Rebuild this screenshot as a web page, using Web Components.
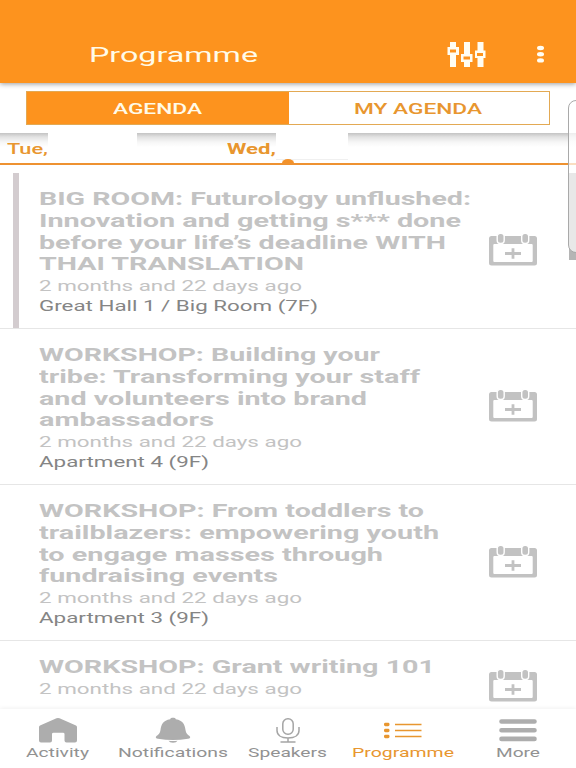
<!DOCTYPE html>
<html lang="en">
<head>
<meta charset="utf-8">
<title>Programme</title>
<style>
    body {
        margin: 0;
        background: #fff;
        font-family: Roboto, "Liberation Sans", sans-serif;
        --accent: #fd931e;
        --muted: #c3c3c3;
    }
</style>
</head>
<body>
<programme-app></programme-app>

<script>
/**
 * One line of text, stretched sideways to the given width
 */
class WideText extends HTMLElement {
    connectedCallback() {
        const root = this.attachShadow({ mode: "open" });
        root.innerHTML = `
            <style>
                :host {
                    display: block;
                    white-space: nowrap;
                }
                span {
                    display: inline-block;
                    transform-origin: 0 50%;
                }
            </style>
            <span><slot></slot></span>
        `;
        const width = Number(this.getAttribute("width"));
        const span = root.querySelector("span");
        this.style.width = width + "px";
        span.style.transform = `scaleX(${width / span.getBoundingClientRect().width})`;
    }
}

class AppHeader extends HTMLElement {
    constructor() {
        super();
        this.attachShadow({ mode: "open" }).innerHTML = `
            <style>
                :host {
                    display: flex;
                    box-sizing: border-box;
                    height: 83px;
                    padding: 38px 31px 0 89px;
                    align-items: flex-start;
                    background: var(--accent);
                    box-shadow: 0 1px 5px rgba(0, 0, 0, .4);
                    position: relative;
                    z-index: 2;
                    color: #fffbe9;
                    font-size: 20px;
                    line-height: 34px;
                }
                .filter {
                    margin: 3px 0 0 auto;
                }
                .dots {
                    margin: 7px 0 0 50px;
                }
            </style>
            <slot></slot>
            <svg class="filter" width="40" height="27" viewBox="0 0 40 27">
                <g fill="#fffdf3">
                    <path d="M4 1h6v25H4zM18 1h6v25h-6zM31.500 1h6v25h-6z"/>
                    <path d="M1.500 6h11.500v8H1.500zM15 13h11.500v8H15zM29 9.500h10.500v7.500h-10.500z"/>
                </g>
                <path fill="#fd931e" d="M4 8.500h6v3H4zM17.500 15.500h6.500v3h-6.500zM31 12h6v3h-6z"/>
            </svg>
            <svg class="dots" width="9" height="20" viewBox="0 0 9 20" fill="#fffdf3">
                <ellipse cx="4.500" cy="3" rx="3.500" ry="2.200"/>
                <ellipse cx="4.500" cy="9.200" rx="3.500" ry="2.200"/>
                <ellipse cx="4.500" cy="15.400" rx="3.500" ry="2.200"/>
            </svg>
        `;
    }
}

class AgendaSwitch extends HTMLElement {
    constructor() {
        super();
        this.attachShadow({ mode: "open" }).innerHTML = `
            <style>
                :host {
                    display: block;
                    box-sizing: border-box;
                    height: 50px;
                    padding: 8px 26px 0;
                    background: #fff;
                    font-size: 15px;
                    font-weight: 500;
                }
                div {
                    display: grid;
                    grid-template-columns: 262px 1fr;
                    box-sizing: border-box;
                    height: 34px;
                    border: 1px solid #e3a953;
                    line-height: 34px;
                }
                ::slotted(*) {
                    display: flex;
                    height: 32px;
                    box-sizing: border-box;
                    padding-right: 2px;
                    justify-content: center;
                    color: #e8962f;
                }
                ::slotted([active]) {
                    background: var(--accent);
                    color: #fffbe9;
                }
            </style>
            <div><slot></slot></div>
        `;
    }
}

class DayTabs extends HTMLElement {
    constructor() {
        super();
        this.attachShadow({ mode: "open" }).innerHTML = `
            <style>
                :host {
                    display: flex;
                    box-sizing: border-box;
                    height: 32px;
                    padding-left: 7px;
                    border-bottom: 2px solid #ee9231;
                    background: linear-gradient(#c3c3c3, #e2e2e2 4px, #f6f6f6 9px, #fff 14px);
                    color: #e8962f;
                    font-size: 14.5px;
                    line-height: 33px;
                }
                .blank {
                    background: #fff;
                }
                .first {
                    width: 89px;
                    height: 30px;
                    margin-right: 90px;
                }
                .second {
                    width: 72px;
                    height: 26px;
                    border-bottom: 1px solid #f0f0f0;
                }
                .second::after {
                    content: "";
                    display: block;
                    width: 12px;
                    height: 4px;
                    margin: 26px 0 0 6px;
                    border-radius: 6px 6px 0 0 / 4px 4px 0 0;
                    background: #f3922a;
                }
            </style>
            <slot name="previous"></slot>
            <div class="blank first"></div>
            <slot name="current"></slot>
            <div class="blank second"></div>
        `;
    }
}

class AddToCalendar extends HTMLElement {
    constructor() {
        super();
        this.attachShadow({ mode: "open" }).innerHTML = `
            <style>
                :host, svg {
                    display: block;
                }
            </style>
            <svg width="50" height="34" viewBox="0 0 50 34">
                <rect x="1" y="4" width="48" height="29.500" rx="2.500" fill="#c2c2c2"/>
                <rect x="5.300" y="12" width="39.400" height="18" rx="1" fill="#fff"/>
                <g fill="#c2c2c2" stroke="#fff" stroke-width="1.400">
                    <rect x="9.200" y="1.300" width="7" height="10.200" rx="3.200"/>
                    <rect x="33.700" y="1.300" width="7" height="10.200" rx="3.200"/>
                </g>
                <path d="M17 21.500h16M25 16.300v10.500" stroke="#c2c2c2" stroke-width="2.800"/>
            </svg>
        `;
    }
}

class SessionItem extends HTMLElement {
    constructor() {
        super();
        this.attachShadow({ mode: "open" }).innerHTML = `
            <style>
                :host {
                    display: flex;
                    box-sizing: border-box;
                    flex: none;
                    height: 156px;
                    padding: 0 38px 0 13px;
                    align-items: center;
                    border-bottom: 1px solid #e6e6e6;
                }
                :host([short]) {
                    height: 92px;
                }
                .bar {
                    width: 6px;
                    align-self: stretch;
                    background: var(--bar, transparent);
                }
                .text {
                    flex: 1;
                    align-self: flex-start;
                    padding: 16px 0 0 19.500px;
                    color: var(--muted);
                    font-size: 15px;
                    line-height: 20px;
                }
                .title {
                    font-size: 18.500px;
                    font-weight: 700;
                    line-height: 21.800px;
                }
                .room {
                    color: #858585;
                }
                add-to-calendar {
                    margin-bottom: 3px;
                }
            </style>
            <div class="bar"></div>
            <div class="text">
                <div class="title"><slot></slot></div>
                <wide-text width="263">2 months and 22 days ago</wide-text>
                <div class="room"><slot name="room"></slot></div>
            </div>
            <add-to-calendar></add-to-calendar>
        `;
    }
}

class NavItem extends HTMLElement {
    constructor() {
        super();
        this.attachShadow({ mode: "open" }).innerHTML = `
            <style>
                :host {
                    display: flex;
                    flex-direction: column;
                    align-items: center;
                    color: #929292;
                    font-size: 13px;
                    line-height: 17px;
                }
                :host([active]) {
                    color: #e8962f;
                }
                ::slotted(svg) {
                    display: block;
                    margin-bottom: 1px;
                }
            </style>
            <slot name="icon"></slot>
            <slot></slot>
        `;
    }
}

class BottomNav extends HTMLElement {
    constructor() {
        super();
        this.attachShadow({ mode: "open" }).innerHTML = `
            <style>
                :host {
                    display: grid;
                    grid-template-columns: repeat(5, 1fr);
                    box-sizing: border-box;
                    height: 59px;
                    padding-top: 7px;
                    background: #fff;
                    box-shadow: 0 -1px 4px rgba(0, 0, 0, .06);
                    position: relative;
                }
            </style>
            <slot></slot>
        `;
    }
}

/**
 * Panel peeking in from the right edge of the screen
 */
class EdgeHandle extends HTMLElement {
    constructor() {
        super();
        this.attachShadow({ mode: "open" }).innerHTML = `
            <style>
                :host {
                    position: absolute;
                    z-index: 3;
                    top: 100px;
                    right: 0;
                    width: 8px;
                    height: 160px;
                    overflow: hidden;
                }
                .panel {
                    position: relative;
                    box-sizing: border-box;
                    width: 20px;
                    height: 153px;
                    border: 1px solid #a9a9a9;
                    border-radius: 8px;
                    background: linear-gradient(rgba(255, 255, 255, .7) 72px, #e8e8e8 72px);
                }
                .shade {
                    height: 14px;
                    margin: -7px 0 0 1px;
                    background: #b5b5b5;
                }
            </style>
            <div class="panel"></div>
            <div class="shade"></div>
        `;
    }
}

class ProgrammeApp extends HTMLElement {
    constructor() {
        super();
        this.attachShadow({ mode: "open" }).innerHTML = `
            <style>
                :host {
                    display: flex;
                    flex-direction: column;
                    position: relative;
                    width: 576px;
                    height: 768px;
                    overflow: hidden;
                }
                main {
                    display: flex;
                    flex: 1;
                    flex-direction: column;
                    min-height: 0;
                    padding-top: 8px;
                    overflow: hidden;
                }
            </style>
            <app-header><wide-text width="169">Programme</wide-text></app-header>
            <agenda-switch>
                <div active><wide-text width="89">AGENDA</wide-text></div>
                <div><wide-text width="128">MY AGENDA</wide-text></div>
            </agenda-switch>
            <day-tabs>
                <wide-text slot="previous" width="41" style="font-weight: 500">Tue,</wide-text>
                <wide-text slot="current" width="49" style="font-weight: 700">Wed,</wide-text>
            </day-tabs>
            <main>
                <session-item style="--bar: #d3cccf">
                    <wide-text width="432">BIG ROOM: Futurology unflushed:</wide-text>
                    <wide-text width="422">Innovation and getting s*** done</wide-text>
                    <wide-text width="407">before your life’s deadline WITH</wide-text>
                    <wide-text width="265">THAI TRANSLATION</wide-text>
                    <wide-text slot="room" width="279">Great Hall 1 / Big Room (7F)</wide-text>
                </session-item>
                <session-item>
                    <wide-text width="341">WORKSHOP: Building your</wide-text>
                    <wide-text width="381">tribe: Transforming your staff</wide-text>
                    <wide-text width="328">and volunteers into brand</wide-text>
                    <wide-text width="175">ambassadors</wide-text>
                    <wide-text slot="room" width="170">Apartment 4 (9F)</wide-text>
                </session-item>
                <session-item>
                    <wide-text width="385">WORKSHOP: From toddlers to</wide-text>
                    <wide-text width="400">trailblazers: empowering youth</wide-text>
                    <wide-text width="344">to engage masses through</wide-text>
                    <wide-text width="239">fundraising events</wide-text>
                    <wide-text slot="room" width="170">Apartment 3 (9F)</wide-text>
                </session-item>
                <session-item short>
                    <wide-text width="396">WORKSHOP: Grant writing 101</wide-text>
                </session-item>
            </main>
            <bottom-nav>
                <nav-item>
                    <svg slot="icon" width="40" height="27" viewBox="0 0 40 27" fill="#adadad">
                        <path d="M18.500 2.200Q20 1.600 21.500 2.200L38 9.500Q39 10 39 11v13.500Q39 26.500 37 26.500H28.500Q26.500 26.500 26.500 24.500V18Q26.500 16.800 25 16.800H15.500Q14 16.800 14 18v6.500Q14 26.500 12 26.500H3Q1 26.500 1 24.500V11Q1 10 2 9.500Z"/>
                    </svg>
                    <wide-text width="63">Activity</wide-text>
                </nav-item>
                <nav-item>
                    <svg slot="icon" width="40" height="27" viewBox="0 0 40 27" fill="#adadad">
                        <path d="M17.200 3.200C17.500 1.400 22.500 1.400 22.800 3.200C30 4.500 31.800 8.500 32.500 14C33 17.500 34.500 18.500 36.500 20C38 21.500 37 22.500 35 22.700Q20 25.200 5 22.700C3 22.500 2 21.500 3.500 20C5.500 18.500 7 17.500 7.500 14C8.200 8.500 10 4.500 17.200 3.200Z"/>
                        <path d="M15.500 24.800Q20 25.200 24.500 24.800Q23.500 26.700 20 26.700Q16.500 26.700 15.500 24.800Z"/>
                    </svg>
                    <wide-text width="110">Notifications</wide-text>
                </nav-item>
                <nav-item>
                    <svg slot="icon" width="40" height="27" viewBox="0 0 40 27" fill="none" stroke="#a5a5a5" stroke-width="1.500">
                        <rect x="14.800" y="2.700" width="10.400" height="15.600" rx="5"/>
                        <path d="M9 11v3.500C9 19 13 22 20 22S31 19 31 14.500V11M20 22v4M12.500 25.900h15"/>
                    </svg>
                    <wide-text width="79">Speakers</wide-text>
                </nav-item>
                <nav-item active>
                    <svg slot="icon" width="40" height="27" viewBox="0 0 40 27" fill="#e8962f">
                        <rect x="1" y="6.800" width="5.500" height="3.400" rx="1.400"/>
                        <rect x="1" y="12.800" width="5.500" height="3.400" rx="1.400"/>
                        <rect x="1" y="18.800" width="5.500" height="3.400" rx="1.400"/>
                        <path d="M12 8.500h26.500M12 14.500h26.500M12 20.500h26.500" stroke="#e8962f" stroke-width="1.300"/>
                    </svg>
                    <wide-text width="102">Programme</wide-text>
                </nav-item>
                <nav-item>
                    <svg slot="icon" width="40" height="27" viewBox="0 0 40 27" stroke="#adadad" stroke-width="4.600" stroke-linecap="round">
                        <path d="M3.500 5.500h33M3.500 14.200h33M3.500 22.900h33"/>
                    </svg>
                    <wide-text width="44">More</wide-text>
                </nav-item>
            </bottom-nav>
            <edge-handle></edge-handle>
        `;
    }
}

customElements.define("wide-text", WideText);
customElements.define("app-header", AppHeader);
customElements.define("agenda-switch", AgendaSwitch);
customElements.define("day-tabs", DayTabs);
customElements.define("add-to-calendar", AddToCalendar);
customElements.define("session-item", SessionItem);
customElements.define("nav-item", NavItem);
customElements.define("bottom-nav", BottomNav);
customElements.define("edge-handle", EdgeHandle);
customElements.define("programme-app", ProgrammeApp);
</script>
</body>
</html>
